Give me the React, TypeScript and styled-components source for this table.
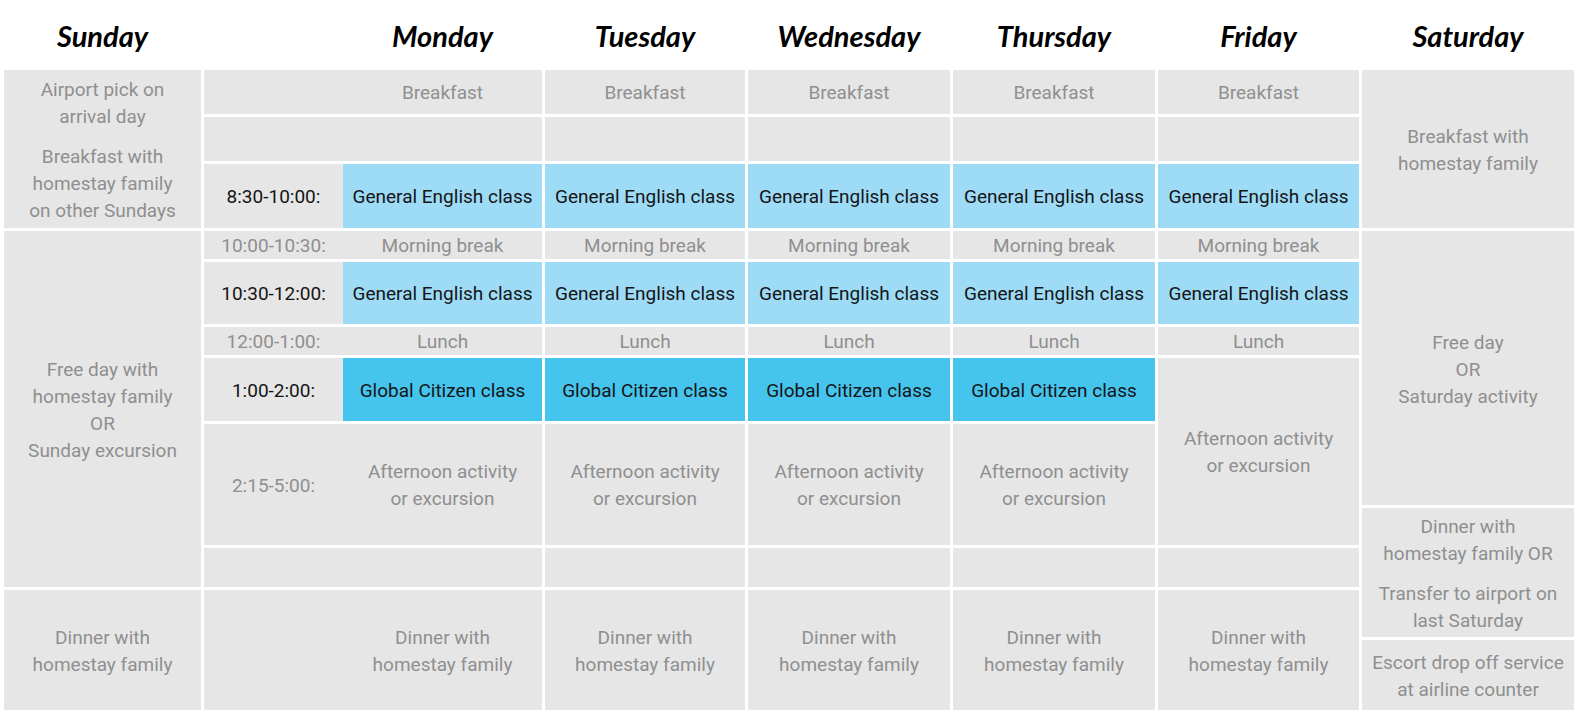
import * as React from "react";
import styled, { createGlobalStyle } from "styled-components";

type Tone = "plain" | "english" | "citizen";

interface Slot {
  row: number;
  span?: number;
  time?: string;
  tone?: Tone;
  text?: string[];
}

const GlobalStyle = createGlobalStyle`
  html, body {
    margin: 0;
    padding: 0;
    background: #ffffff;
  }
  body {
    font-family: Roboto, "Liberation Sans", Arial, sans-serif;
  }
`;

const Timetable = styled.div`
  display: grid;
  grid-template-columns: 197px 338px 200px 202px 202px 201px 212px;
  grid-template-rows: 67px 44px 44px 64px 28px 62px 28px 63px 121px 39px 120px;
  column-gap: 3px;
  row-gap: 3px;
  padding-left: 4px;
`;

const DayHeading = styled.div<{ $col: number; $offset?: number }>`
  grid-column: ${(p) => p.$col};
  grid-row: 1;
  display: flex;
  align-items: center;
  justify-content: center;
  padding-top: 3px;
  padding-left: ${(p) => p.$offset ?? 0}px;
  font-family: Lato, "Open Sans", sans-serif;
  font-style: italic;
  font-weight: 700;
  font-size: 29px;
  color: #000000;
`;

const toneBg: Record<Tone, string> = {
  plain: "#e6e6e6",
  english: "#9ddbf6",
  citizen: "#45c4ee",
};

const Cell = styled.div<{ $col: number; $row: number; $span?: number }>`
  grid-column: ${(p) => p.$col};
  grid-row: ${(p) => p.$row} / span ${(p) => p.$span ?? 1};
  background: #e6e6e6;
  display: flex;
  flex-direction: column;
  align-items: center;
  justify-content: center;
  gap: 13px;
  padding-top: 2px;
  text-align: center;
  font-size: 19px;
  line-height: 27px;
  color: #8f8f8f;
`;

const MondayCell = styled.div<{ $row: number; $span?: number }>`
  grid-column: 2;
  grid-row: ${(p) => p.$row} / span ${(p) => p.$span ?? 1};
  background: #e6e6e6;
  display: flex;
  font-size: 19px;
  line-height: 27px;
`;

const TimeLabel = styled.div<{ $dark: boolean }>`
  width: 139px;
  flex: none;
  display: flex;
  align-items: center;
  justify-content: center;
  padding-top: 1px;
  color: ${(p) => (p.$dark ? "#151515" : "#8f8f8f")};
`;

const Activity = styled.div<{ $tone: Tone }>`
  flex: 1;
  display: flex;
  flex-direction: column;
  align-items: center;
  justify-content: center;
  padding-top: 1px;
  text-align: center;
  background: ${(p) => toneBg[p.$tone]};
  color: ${(p) => (p.$tone === "plain" ? "#8f8f8f" : "#151515")};
`;

const ClassCell = styled(Cell)<{ $tone: Tone }>`
  padding-top: 1px;
  background: ${(p) => toneBg[p.$tone]};
  color: ${(p) => (p.$tone === "plain" ? "#8f8f8f" : "#151515")};
`;

const Paragraph = styled.div``;

const SaturdayColumn = styled.div`
  grid-column: 7;
  grid-row: 2 / -1;
  display: flex;
  flex-direction: column;
  gap: 3px;
`;

const SaturdayBlock = styled.div<{ $height?: number }>`
  ${(p) => (p.$height ? `height: ${p.$height}px;` : "flex: 1;")}
  flex-shrink: 0;
  background: #e6e6e6;
  display: flex;
  flex-direction: column;
  align-items: center;
  justify-content: center;
  gap: 13px;
  padding-top: 2px;
  box-sizing: border-box;
  text-align: center;
  font-size: 19px;
  line-height: 27px;
  color: #8f8f8f;
`;

const english = ["General English class"];
const citizen = ["Global Citizen class"];
const afternoon = ["Afternoon activity", "or excursion"];
const dinner = ["Dinner with", "homestay family"];

const weekdaySlots: Slot[] = [
  { row: 2, text: ["Breakfast"] },
  { row: 3 },
  { row: 4, time: "8:30-10:00:", tone: "english", text: english },
  { row: 5, time: "10:00-10:30:", text: ["Morning break"] },
  { row: 6, time: "10:30-12:00:", tone: "english", text: english },
  { row: 7, time: "12:00-1:00:", text: ["Lunch"] },
  { row: 8, time: "1:00-2:00:", tone: "citizen", text: citizen },
  { row: 9, time: "2:15-5:00:", text: afternoon },
  { row: 10 },
  { row: 11, text: dinner },
];

const fridaySlots: Slot[] = [
  ...weekdaySlots.slice(0, 6),
  { row: 8, span: 2, text: afternoon },
  { row: 10 },
  { row: 11, text: dinner },
];

const Lines = ({ lines }: { lines?: string[] }) => (
  <Paragraph>
    {lines?.map((line, i) => (
      <React.Fragment key={i}>
        {i > 0 && <br />}
        {line}
      </React.Fragment>
    ))}
  </Paragraph>
);

const headings = [
  { name: "Sunday", col: 1 },
  { name: "Monday", col: 2, offset: 139 },
  { name: "Tuesday", col: 3 },
  { name: "Wednesday", col: 4 },
  { name: "Thursday", col: 5 },
  { name: "Friday", col: 6 },
  { name: "Saturday", col: 7 },
];

export default function App() {
  return (
    <>
      <GlobalStyle />
      <Timetable>
        {headings.map((h) => (
          <DayHeading key={h.name} $col={h.col} $offset={h.offset}>
            {h.name}
          </DayHeading>
        ))}

        <Cell $col={1} $row={2} $span={3}>
          <Lines lines={["Airport pick on", "arrival day"]} />
          <Lines lines={["Breakfast with", "homestay family", "on other Sundays"]} />
        </Cell>
        <Cell $col={1} $row={5} $span={6}>
          <Lines lines={["Free day with", "homestay family", "OR", "Sunday excursion"]} />
        </Cell>
        <Cell $col={1} $row={11}>
          <Lines lines={dinner} />
        </Cell>

        {weekdaySlots.map((s) => (
          <MondayCell key={`mon-${s.row}`} $row={s.row} $span={s.span}>
            <TimeLabel $dark={!!s.tone && s.tone !== "plain"}>{s.time}</TimeLabel>
            <Activity $tone={s.tone ?? "plain"}>
              <Lines lines={s.text} />
            </Activity>
          </MondayCell>
        ))}

        {[3, 4, 5].map((col) =>
          weekdaySlots.map((s) => (
            <ClassCell key={`${col}-${s.row}`} $col={col} $row={s.row} $span={s.span} $tone={s.tone ?? "plain"}>
              <Lines lines={s.text} />
            </ClassCell>
          ))
        )}

        {fridaySlots.map((s) => (
          <ClassCell key={`fri-${s.row}`} $col={6} $row={s.row} $span={s.span} $tone={s.tone ?? "plain"}>
            <Lines lines={s.text} />
          </ClassCell>
        ))}

        <SaturdayColumn>
          <SaturdayBlock $height={158}>
            <Lines lines={["Breakfast with", "homestay family"]} />
          </SaturdayBlock>
          <SaturdayBlock $height={274}>
            <Lines lines={["Free day", "OR", "Saturday activity"]} />
          </SaturdayBlock>
          <SaturdayBlock $height={129}>
            <Lines lines={["Dinner with", "homestay family OR"]} />
            <Lines lines={["Transfer to airport on", "last Saturday"]} />
          </SaturdayBlock>
          <SaturdayBlock>
            <Lines lines={["Escort drop off service", "at airline counter"]} />
          </SaturdayBlock>
        </SaturdayColumn>
      </Timetable>
    </>
  );
}
